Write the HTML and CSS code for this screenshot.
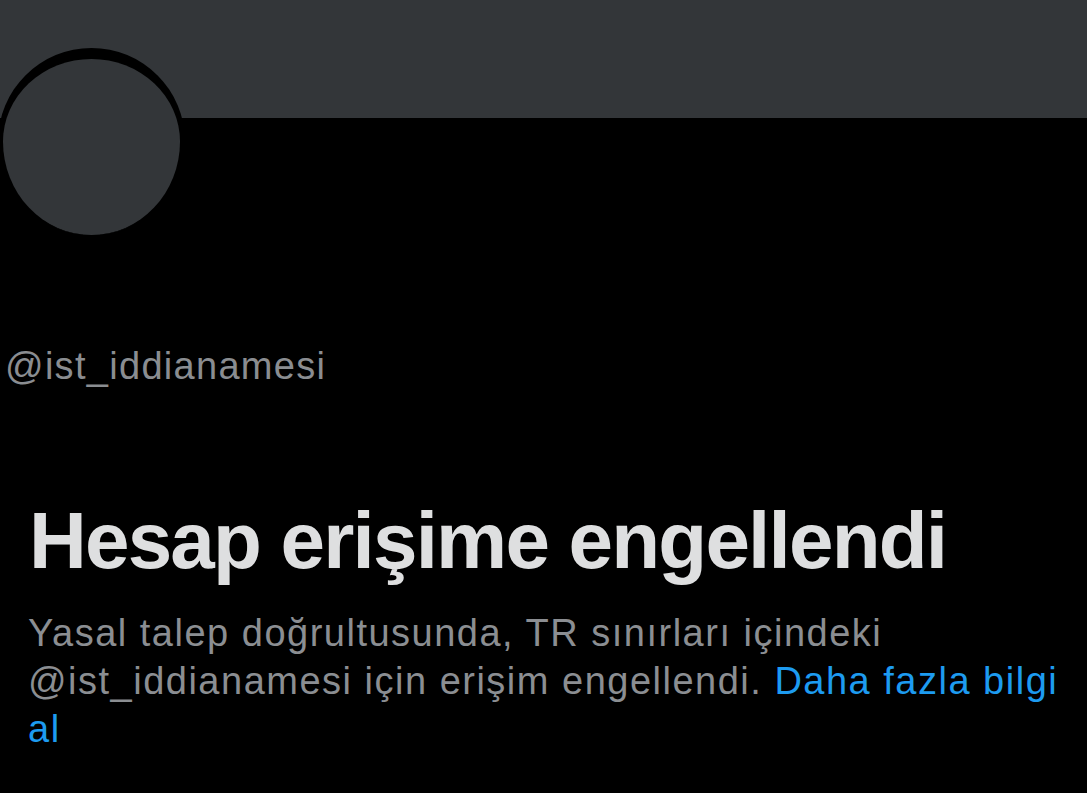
FILE: index.html
```html
<!DOCTYPE html>
<html lang="tr">
<head>
    <meta charset="UTF-8">
    <meta name="viewport" content="width=device-width, initial-scale=1.0">
    <title>Hesap erişime engellendi</title>
    <link rel="stylesheet" href="styles.css">
</head>
<body>

<!-- Kapak -->
<div class="banner"></div>

<section class="profile">
    <div class="avatar"></div>
    <div class="handle">@ist_iddianamesi</div>
</section>

<!-- Engelleme bildirimi -->
<section class="notice">
    <h1>Hesap erişime engellendi</h1>
    <p>Yasal talep doğrultusunda, TR sınırları içindeki @ist_iddianamesi için erişim engellendi. <a href="#">Daha fazla bilgi al</a></p>
</section>

</body>
</html>
```

FILE: styles.css
```css
body {
    margin: 0;
    padding: 0;
    background: #000;
    color: #e7e9ea;
    font-family: 'Liberation Sans', Arial, sans-serif;
    overflow: hidden;
}

.banner {
    height: 118px;
    background: #333639;
}

.profile {
    padding: 0;
}

/* l'anneau noir est plus épais en haut */
.avatar {
    width: 177px;
    height: 176px;
    margin: -70px 0 0 -2px;
    border-style: solid;
    border-color: #000;
    border-width: 11px 5px 0 5px;
    border-radius: 50%;
    background: #333639;
    position: relative;
}

.handle {
    margin-top: 108px;
    padding-left: 5px;
    font-size: 38px;
    line-height: 46px;
    letter-spacing: 1.3px;
    color: #8a8d91;
}

.notice {
    padding: 0 20px 0 28px;
}

.notice h1 {
    margin: 112px 0 0 1px;
    font-size: 80px;
    line-height: 80px;
    font-weight: bold;
    letter-spacing: -1.8px;
    color: #dedfe0;
}

.notice p {
    margin: 28px 0 0;
    font-size: 38px;
    line-height: 48px;
    letter-spacing: 1.5px;
    color: #8b8e92;
}

.notice a {
    color: #1d9bf0;
    text-decoration: none;
}
```
